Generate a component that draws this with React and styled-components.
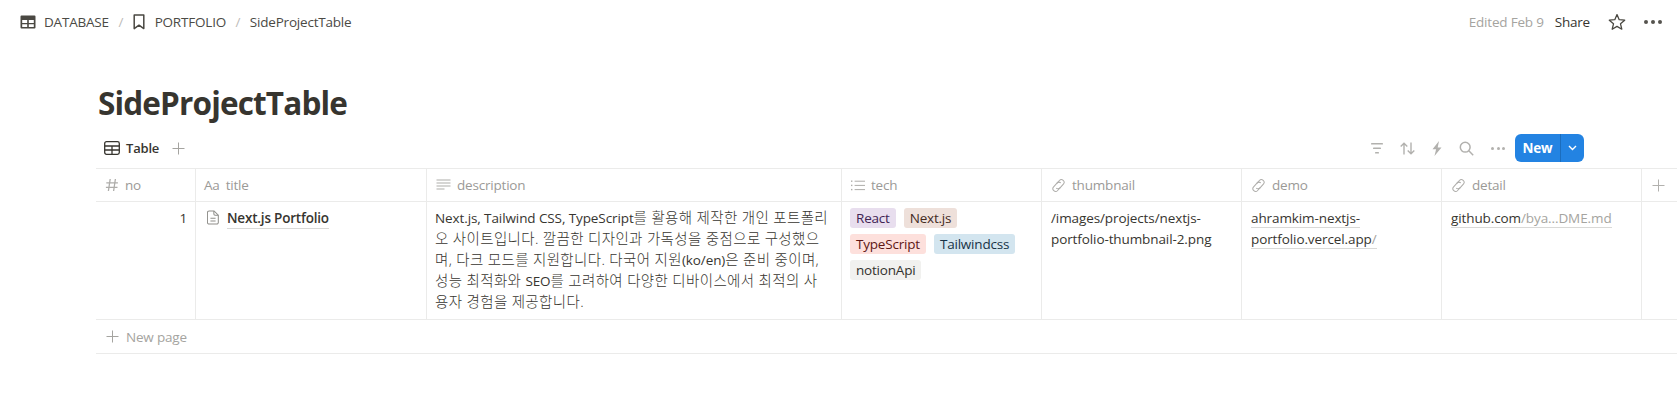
import styled, { createGlobalStyle } from "styled-components"

const GlobalStyle = createGlobalStyle`
  html, body {
    margin: 0;
    padding: 0;
    background: #ffffff;
  }
  body {
    font-family: "Open Sans", "Noto Sans", "Noto Sans CJK KR", sans-serif;
    color: #37352f;
    overflow: hidden;
  }
`

const columns = "100px 231px 415px 200px 200px 200px 200px 1fr"

const TableIcon = () => (
  <svg width="16" height="16" viewBox="0 0 16 16">
    <path
      fill="currentColor"
      fillRule="evenodd"
      d="M1.5 1.5h13a1 1 0 0 1 1 1v11a1 1 0 0 1-1 1h-13a1 1 0 0 1-1-1v-11a1 1 0 0 1 1-1zM2.2 6v3h5v-3zM8.8 6v3h5v-3zM2.2 10.2v2.8h5v-2.8zM8.8 10.2v2.8h5v-2.8z"
    />
  </svg>
)

const TableOutline = () => (
  <svg width="16" height="14" viewBox="0 0 16 14" fill="none" stroke="currentColor" strokeWidth="1.3">
    <rect x="0.7" y="0.7" width="14.6" height="12.6" rx="1.8" />
    <path d="M0.7 5h14.6M0.7 9h14.6M8 5v8.3" />
  </svg>
)

const Bookmark = () => (
  <svg width="12" height="16" viewBox="0 0 12 16" fill="none" stroke="currentColor" strokeWidth="1.5">
    <path d="M1.2 1h9.6v13.6L6 11.2l-4.8 3.4z" strokeLinejoin="round" />
  </svg>
)

const Star = () => (
  <svg width="18" height="18" viewBox="0 0 18 18" fill="none" stroke="currentColor" strokeWidth="1.3">
    <path d="M9 1.6l2.2 5.1 5.5.5-4.2 3.6 1.3 5.4L9 13.4l-4.8 2.8 1.3-5.4L1.3 7.2l5.5-.5z" strokeLinejoin="round" />
  </svg>
)

const Dots = ({ size, gap }) => (
  <DotRow $gap={gap}>
    <Dot $size={size} />
    <Dot $size={size} />
    <Dot $size={size} />
  </DotRow>
)

const FilterIcon = () => (
  <svg width="12" height="11" viewBox="0 0 12 11" fill="currentColor">
    <rect x="0" y="0" width="12" height="1.6" rx="0.7" />
    <rect x="2" y="4.5" width="8" height="1.6" rx="0.7" />
    <rect x="4" y="9" width="4" height="1.6" rx="0.7" />
  </svg>
)

const SortIcon = () => (
  <svg width="15" height="13" viewBox="0 0 15 13" fill="none" stroke="currentColor" strokeWidth="1.4">
    <path d="M4 12.5V1.2M0.7 4.5L4 1.2l3.3 3.3M11 0.5v11.3M7.7 8.5l3.3 3.3 3.3-3.3" />
  </svg>
)

const BoltIcon = () => (
  <svg width="10" height="15" viewBox="0 0 10 15" fill="currentColor">
    <path d="M7 0L0.5 8.2h3.6L2.5 15l7-8.6H5.7z" />
  </svg>
)

const SearchIcon = () => (
  <svg width="15" height="15" viewBox="0 0 15 15" fill="none" stroke="currentColor" strokeWidth="1.5">
    <circle cx="6.2" cy="6.2" r="4.9" />
    <path d="M9.8 9.8l4.4 4.4" />
  </svg>
)

const Chevron = () => (
  <svg width="9" height="6" viewBox="0 0 9 6" fill="none" stroke="currentColor" strokeWidth="1.4">
    <path d="M1 1l3.5 3.5L8 1" />
  </svg>
)

const PlusIcon = () => (
  <svg width="13" height="13" viewBox="0 0 13 13" fill="none" stroke="currentColor" strokeWidth="1">
    <path d="M6.5 0.5v12M0.5 6.5h12" />
  </svg>
)

const NumberIcon = () => (
  <svg width="14" height="14" viewBox="0 0 14 14" fill="none" stroke="currentColor" strokeWidth="1.3">
    <path d="M5.2 1L3.4 13M10.4 1L8.6 13M1.3 4.8h11.6M0.9 9.4h11.6" />
  </svg>
)

const TextIcon = () => (
  <svg width="15" height="12" viewBox="0 0 15 12" fill="currentColor">
    <rect x="0.5" y="0.5" width="14" height="1" />
    <rect x="0.5" y="3.5" width="14" height="1" />
    <rect x="0.5" y="6.5" width="14" height="1" />
    <rect x="0.5" y="9.5" width="8" height="1" />
  </svg>
)

const ListIcon = () => (
  <svg width="14" height="11" viewBox="0 0 14 11" fill="currentColor">
    <rect x="0" y="0.5" width="1.4" height="1.4" />
    <rect x="0" y="4.7" width="1.4" height="1.4" />
    <rect x="0" y="8.9" width="1.4" height="1.4" />
    <rect x="3.6" y="0.7" width="10.4" height="1" />
    <rect x="3.6" y="4.9" width="10.4" height="1" />
    <rect x="3.6" y="9.1" width="10.4" height="1" />
  </svg>
)

const LinkIcon = () => (
  <svg width="15" height="15" viewBox="0 0 15 15" fill="none" stroke="currentColor" strokeWidth="1">
    <g transform="rotate(-48 7.5 7.5)">
      <path d="M7 10.2H3.2a2.7 2.7 0 0 1 0-5.4h5a2.7 2.7 0 0 1 2.7 2.7" />
      <path d="M8 4.8h3.800a2.700 2.700 0 0 1 0 5.400h-5a2.700 2.700 0 0 1-2.700-2.700" />
    </g>
  </svg>
)

const PageIcon = () => (
  <svg width="12" height="15" viewBox="0 0 14 17" fill="none" stroke="currentColor" strokeWidth="1.2">
    <path d="M2.5 0.8h5.7l5 5v8.4a2 2 0 0 1-2 2h-8.7a2 2 0 0 1-2-2v-11.4a2 2 0 0 1 2-2z" />
    <path d="M8 1v3.5a1.5 1.5 0 0 0 1.5 1.5h3.5M4 9.500h6M4 12.500h6" />
  </svg>
)

const tagColors = {
  purple: ["#e8deee", "#412454"],
  brown: ["#eee0da", "#442a1e"],
  red: ["#fde0dc", "#5d1715"],
  blue: ["#d3e5ef", "#183347"],
  gray: ["#f1f1ef", "#32302c"],
}

const tags = [
  ["React", "purple"],
  ["Next.js", "brown"],
  ["TypeScript", "red"],
  ["Tailwindcss", "blue"],
  ["notionApi", "gray"],
]

export default function App() {
  const headers = [
    [<NumberIcon key="i" />, "no"],
    [<AaMark key="i">Aa</AaMark>, "title"],
    [<TextIcon key="i" />, "description"],
    [<ListIcon key="i" />, "tech"],
    [<LinkIcon key="i" />, "thumbnail"],
    [<LinkIcon key="i" />, "demo"],
    [<LinkIcon key="i" />, "detail"],
  ]

  return (
    <Page>
      <GlobalStyle />
      <TopBar>
        <Crumbs>
          <CrumbIcon><TableIcon /></CrumbIcon>
          <Crumb>DATABASE</Crumb>
          <Slash>/</Slash>
          <CrumbIcon $gap={10}><Bookmark /></CrumbIcon>
          <Crumb>PORTFOLIO</Crumb>
          <Slash>/</Slash>
          <Crumb>SideProjectTable</Crumb>
        </Crumbs>
        <TopActions>
          <Edited>Edited Feb 9</Edited>
          <Share>Share</Share>
          <StarWrap><Star /></StarWrap>
          <TopDots><Dots size={4} gap={3} /></TopDots>
        </TopActions>
      </TopBar>

      <Content>
        <Title>SideProjectTable</Title>
        <ViewBar>
          <ViewTab>
            <TableOutline />
            <span>Table</span>
            <AddView><PlusIcon /></AddView>
          </ViewTab>
          <Tools>
            <FilterIcon />
            <SortIcon />
            <BoltIcon />
            <SearchIcon />
            <Dots size={3} gap={2.4} />
            <NewButton>
              <NewLabel>New</NewLabel>
              <NewArrow><Chevron /></NewArrow>
            </NewButton>
          </Tools>
        </ViewBar>

        <Table>
          <HeadRow>
            {headers.map(([icon, name]) => (
              <HeadCell key={name}>
                <HeadIcon>{icon}</HeadIcon>
                {name}
              </HeadCell>
            ))}
            <PlusCell><PlusIcon /></PlusCell>
          </HeadRow>
          <BodyRow>
            <NumberCell>1</NumberCell>
            <TitleCell>
              <PageMark><PageIcon /></PageMark>
              <TitleLink>Next.js Portfolio</TitleLink>
            </TitleCell>
            <DescriptionCell>
              Next.js, Tailwind CSS, TypeScript<Ko>를 활용해 제작한 개인 포트폴리</Ko><br />
              <Ko>오 사이트입니다. 깔끔한 디자인과 가독성을 중점으로 구성했으</Ko><br />
              <Ko>며, 다크 모드를 지원합니다. 다국어 지원</Ko>(ko/en)<Ko>은 준비 중이며,</Ko><br />
              <Ko>성능 최적화와 </Ko>SEO<Ko>를 고려하여 다양한 디바이스에서 최적의 사</Ko><br />
              <Ko>용자 경험을 제공합니다.</Ko>
            </DescriptionCell>
            <TagCell>
              {tags.map(([name, color]) => (
                <Tag key={name} $color={color}>{name}</Tag>
              ))}
            </TagCell>
            <TextCell>
              /images/projects/nextjs-<br />
              portfolio-thumbnail-2.png
            </TextCell>
            <TextCell>
              <LinkText>ahramkim-nextjs-</LinkText><br />
              <LinkText>portfolio.vercel.app<Faint>/</Faint></LinkText>
            </TextCell>
            <TextCell>
              <LinkText>github.com<Faint>/bya...DME.md</Faint></LinkText>
            </TextCell>
            <EmptyCell />
          </BodyRow>
          <NewRow>
            <PlusIcon />
            <span>New page</span>
          </NewRow>
        </Table>
      </Content>
    </Page>
  )
}

const Page = styled.div`
  width: 100%;
  height: 418px;
  background: #ffffff;
  font-size: 13.5px;
  letter-spacing: -0.2px;
`

const TopBar = styled.div`
  height: 43px;
  padding: 0 15px 0 20px;
  display: flex;
  align-items: center;
  justify-content: space-between;
`

const Crumbs = styled.div`
  display: flex;
  align-items: center;
`

const CrumbIcon = styled.span`
  display: flex;
  color: #4a4842;
  margin-right: ${(p) => p.$gap || 8}px;
`

const Crumb = styled.span`
  color: #4b4a45;
`

const Slash = styled.span`
  color: #bdbcb9;
  margin: 0 9.5px;
`

const TopActions = styled.div`
  display: flex;
  align-items: center;
`

const Edited = styled.span`
  color: #a5a4a0;
`

const Share = styled.span`
  color: #37352f;
  margin-left: 11px;
`

const StarWrap = styled.span`
  display: flex;
  color: #4a4842;
  margin-left: 18px;
`

const TopDots = styled.span`
  display: flex;
  color: #55534e;
  margin-left: 18px;
`

const DotRow = styled.span`
  display: flex;
  align-items: center;
  gap: ${(p) => p.$gap}px;
`

const Dot = styled.span`
  display: block;
  width: ${(p) => p.$size}px;
  height: ${(p) => p.$size}px;
  border-radius: 50%;
  background: currentColor;
`

const Content = styled.div`
  padding-left: 96px;
`

const Title = styled.h1`
  margin: 40px 0 0 2px;
  font-size: 31.5px;
  line-height: 40px;
  font-weight: 700;
  letter-spacing: -0.85px;
  color: #37352f;
`

const ViewBar = styled.div`
  height: 28px;
  margin: 11px 0 6px;
  padding-left: 8px;
  display: flex;
  align-items: center;
  justify-content: space-between;
`

const ViewTab = styled.div`
  display: flex;
  align-items: center;
  gap: 6px;
  font-weight: 600;
  font-size: 13px;
  color: #37352f;
`

const AddView = styled.span`
  display: flex;
  color: #a5a4a0;
  margin-left: 7px;
`

const Tools = styled.div`
  display: flex;
  align-items: center;
  gap: 17px;
  color: #b2b1ae;
  padding-right: 93px;
`

const NewButton = styled.div`
  display: flex;
  height: 28px;
  width: 69px;
  margin-left: -7px;
  border-radius: 6px;
  overflow: hidden;
  background: #2383e2;
  color: #ffffff;
`

const NewLabel = styled.span`
  flex: 1;
  display: flex;
  align-items: center;
  justify-content: center;
  font-weight: 700;
  font-size: 13.5px;
  border-right: 1px solid #1b6dbd;
`

const NewArrow = styled.span`
  width: 23px;
  display: flex;
  align-items: center;
  justify-content: center;
`

const Table = styled.div`
  border-top: 1px solid #ebebea;
`

const HeadRow = styled.div`
  display: grid;
  grid-template-columns: ${columns};
  height: 32px;
  border-bottom: 1px solid #ebebea;
`

const HeadCell = styled.div`
  display: flex;
  align-items: center;
  padding-left: 9px;
  color: #9b9a97;
  border-right: 1px solid #ebebea;
`

const HeadIcon = styled.span`
  display: flex;
  align-items: center;
  margin-right: 6px;
  color: #aeadaa;
`

const AaMark = styled.span`
  color: #9b9a97;
  margin-left: -1px;
`

const PlusCell = styled.div`
  display: flex;
  align-items: center;
  padding-left: 10px;
  color: #b2b1ae;
`

const BodyRow = styled.div`
  display: grid;
  grid-template-columns: ${columns};
  height: 117px;
  border-bottom: 1px solid #ebebea;
`

const BodyCell = styled.div`
  padding: 6px 8px 0 9px;
  line-height: 21px;
  border-right: 1px solid #ebebea;
`

const NumberCell = styled(BodyCell)`
  text-align: right;
  padding-right: 8px;
`

const TitleCell = styled(BodyCell)`
  display: flex;
  align-items: flex-start;
  font-weight: 600;
`

const PageMark = styled.span`
  display: flex;
  color: #8f8e8a;
  margin: 2px 8px 0 2px;
`

const TitleLink = styled.span`
  border-bottom: 1px solid #d9d9d7;
  line-height: 19px;
  padding-top: 1px;
`

const TextCell = styled(BodyCell)`
  color: #37352f;
  font-size: 13.5px;
  letter-spacing: -0.1px;
  white-space: nowrap;
`

const DescriptionCell = styled(TextCell)`
  padding-left: 8px;
`

const Ko = styled.span`
  font-size: 14.5px;
  font-weight: 300;
  line-height: 1;
  letter-spacing: 0.35px;
`

const LinkText = styled.span`
  border-bottom: 1px solid #d9d9d7;
`

const Faint = styled.span`
  color: #a5a4a0;
`

const TagCell = styled(BodyCell)`
  display: flex;
  flex-wrap: wrap;
  align-content: flex-start;
  gap: 6px 8px;
  padding: 6px 8px 0 8px;
`

const Tag = styled.span`
  height: 20px;
  line-height: 20px;
  padding: 0 6px;
  border-radius: 3px;
  background: ${(p) => tagColors[p.$color][0]};
  color: ${(p) => tagColors[p.$color][1]};
`

const EmptyCell = styled.div``

const NewRow = styled.div`
  display: flex;
  align-items: center;
  gap: 7px;
  height: 33px;
  padding-left: 10px;
  color: #a5a4a0;
  border-bottom: 1px solid #ebebea;
`
